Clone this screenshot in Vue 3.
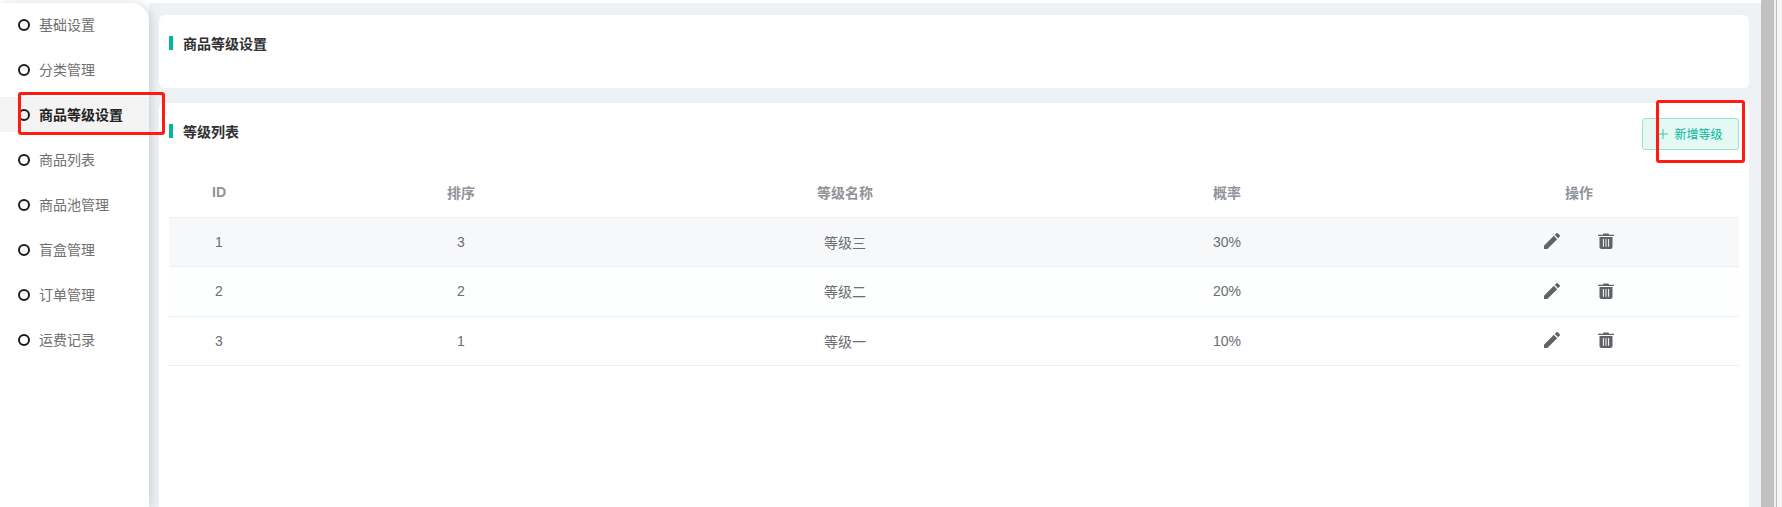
<script setup>
const menus = ["基础设置", "分类管理", "商品等级设置", "商品列表", "商品池管理", "盲盒管理", "订单管理", "运费记录"];
const activeMenu = "商品等级设置";
const levels = [
  { id: 1, sort: 3, name: "等级三", rate: "30%" },
  { id: 2, sort: 2, name: "等级二", rate: "20%" },
  { id: 3, sort: 1, name: "等级一", rate: "10%" },
];
</script>

<template>
  <div class="page">
    <aside class="side">
      <div
        v-for="item in menus"
        :key="item"
        class="menu-item"
        :class="{ active: item === activeMenu }">
        <i class="dot"></i>
        <span class="menu-text">{{ item }}</span>
      </div>
    </aside>

    <main class="main">
      <section class="card top-card">
        <h3 class="title">商品等级设置</h3>
      </section>
      <section class="card list-card">
        <div class="list-head">
          <h3 class="title">等级列表</h3>
          <button class="add-btn">
            <svg class="plus" viewBox="0 0 10 10"><path d="M5 0v10M0 5h10" /></svg>
            <span class="add-text">新增等级</span>
          </button>
        </div>
        <table class="table">
          <colgroup>
            <col style="width: 100px" />
            <col style="width: 384px" />
            <col style="width: 384px" />
            <col style="width: 380px" />
            <col />
          </colgroup>
          <thead>
            <tr>
              <th>ID</th>
              <th>排序</th>
              <th>等级名称</th>
              <th>概率</th>
              <th class="op-head">操作</th>
            </tr>
          </thead>
          <tbody>
            <tr v-for="row in levels" :key="row.id">
              <td>{{ row.id }}</td>
              <td>{{ row.sort }}</td>
              <td>{{ row.name }}</td>
              <td>{{ row.rate }}</td>
              <td>
                <div class="ops">
                  <svg class="op-icon" viewBox="3 3 18 18">
                    <path d="M3 17.25V21h3.75L17.81 9.94l-3.75-3.75L3 17.25zM20.71 7.04a1 1 0 0 0 0-1.41l-2.34-2.34a1 1 0 0 0-1.41 0l-1.83 1.83 3.75 3.75 1.83-1.83z" />
                  </svg>
                  <svg class="op-icon" viewBox="0 0 16 16">
                    <path d="M5.5 0.5h5l.6 1.2H16v1.4H0V1.7h4.9z" />
                    <path fill-rule="evenodd" d="M1.5 3.9h13v10.1c0 1.1-.9 2-2 2h-9c-1.1 0-2-.9-2-2zM4.9 6v7.8h1v-7.8zM7.5 6v7.8h1v-7.8zM10.1 6v7.8h1v-7.8z" />
                  </svg>
                </div>
              </td>
            </tr>
          </tbody>
        </table>
      </section>
    </main>

    <div class="scrollbar"><div class="thumb"></div><div class="track"></div></div>

    <div class="mark mark-menu"></div>
    <div class="mark mark-btn"></div>
  </div>
</template>

<style>
html,
body {
  margin: 0;
  overflow: hidden;
  background: #fff;
}
</style>

<style scoped>
.page {
  position: relative;
  display: flex;
  height: 507px;
  padding-top: 3px;
  box-sizing: border-box;
  background: #fff;
  font-family: "Liberation Sans", "Noto Sans CJK SC", sans-serif;
  font-size: 14px;
  color: #606266;
}

.side {
  position: relative;
  z-index: 1;
  flex: 0 0 149px;
  padding-top: 4px;
  box-sizing: border-box;
  background: #fff;
  border-top-right-radius: 18px;
  box-shadow: 3px 0 8px rgba(120, 135, 150, 0.28);
}

.menu-item {
  display: flex;
  align-items: center;
  height: 35px;
  margin-bottom: 10px;
  padding-left: 18px;
  color: #707070;
}

.menu-item.active {
  background: #f3f3f4;
  color: #222;
  font-weight: 700;
}

.menu-text {
  padding-bottom: 2px;
}

.dot {
  width: 12px;
  height: 12px;
  margin-right: 9px;
  box-sizing: border-box;
  border: 2px solid #1c1c1c;
  border-radius: 50%;
}

.main {
  flex: 1;
  display: flex;
  flex-direction: column;
  gap: 15px;
  padding: 12px 12px 0 10px;
  background: #eff2f5;
}

.card {
  background: #fff;
  border-radius: 6px;
  padding: 0 10px;
}

.top-card {
  height: 73px;
  padding-top: 21px;
  box-sizing: border-box;
}

.list-card {
  flex: 1;
  border-radius: 6px 6px 0 0;
}

.title {
  margin: 0;
  height: 14px;
  padding-left: 10px;
  border-left: 4px solid #00b89a;
  font-size: 14px;
  line-height: 16px;
  font-weight: 700;
  color: #303133;
}

.list-head {
  display: flex;
  justify-content: space-between;
  height: 32px;
  padding-top: 15px;
}

.list-head .title {
  margin-top: 6px;
}

.add-btn {
  display: flex;
  align-items: center;
  justify-content: center;
  gap: 6px;
  width: 97px;
  height: 32px;
  padding: 0;
  background: #e6f8f4;
  border: 1px solid #99e5d5;
  border-radius: 3px;
  color: #00b89a;
  font-family: inherit;
  font-size: 12px;
}

.add-text {
  padding-bottom: 2px;
}

.plus {
  width: 10px;
  height: 10px;
  fill: none;
  stroke: #33c6ae;
  stroke-width: 1;
}

.table {
  width: 100%;
  margin-top: 19px;
  border-collapse: collapse;
  table-layout: fixed;
}

th,
td {
  padding: 0;
  text-align: center;
  border-bottom: 1px solid #ebeef5;
  font-size: 14px;
}

th {
  height: 46px;
  padding-bottom: 2px;
  color: #909399;
  font-weight: 700;
}

th.op-head {
  padding-left: 2px;
}

td {
  height: 48.3px;
  color: #6b6d70;
}

tbody tr:nth-child(1) {
  background: #f7f8fa;
}

tbody tr:nth-child(2) {
  background: #fdfefe;
}

.ops {
  display: flex;
  justify-content: center;
  gap: 38px;
  padding-left: 2px;
  padding-bottom: 1.5px;
}

.op-icon {
  width: 16px;
  height: 16px;
  fill: #606266;
}

.scrollbar {
  display: flex;
  flex: 0 0 21px;
  margin-top: -3px;
  background: #f7f7f7;
}

.thumb {
  width: 13px;
  background: #c1c1c1;
}

.track {
  width: 3px;
  border-right: 1px solid #bdbdbd;
  box-sizing: border-box;
  background: #f1f1f1;
}

.mark {
  position: absolute;
  z-index: 2;
  box-sizing: border-box;
  border: 3px solid #ff1a12;
  border-radius: 3px;
}

.mark-menu {
  left: 18px;
  top: 92px;
  width: 147px;
  height: 43px;
}

.mark-btn {
  left: 1656px;
  top: 100px;
  width: 89px;
  height: 63px;
}
</style>
